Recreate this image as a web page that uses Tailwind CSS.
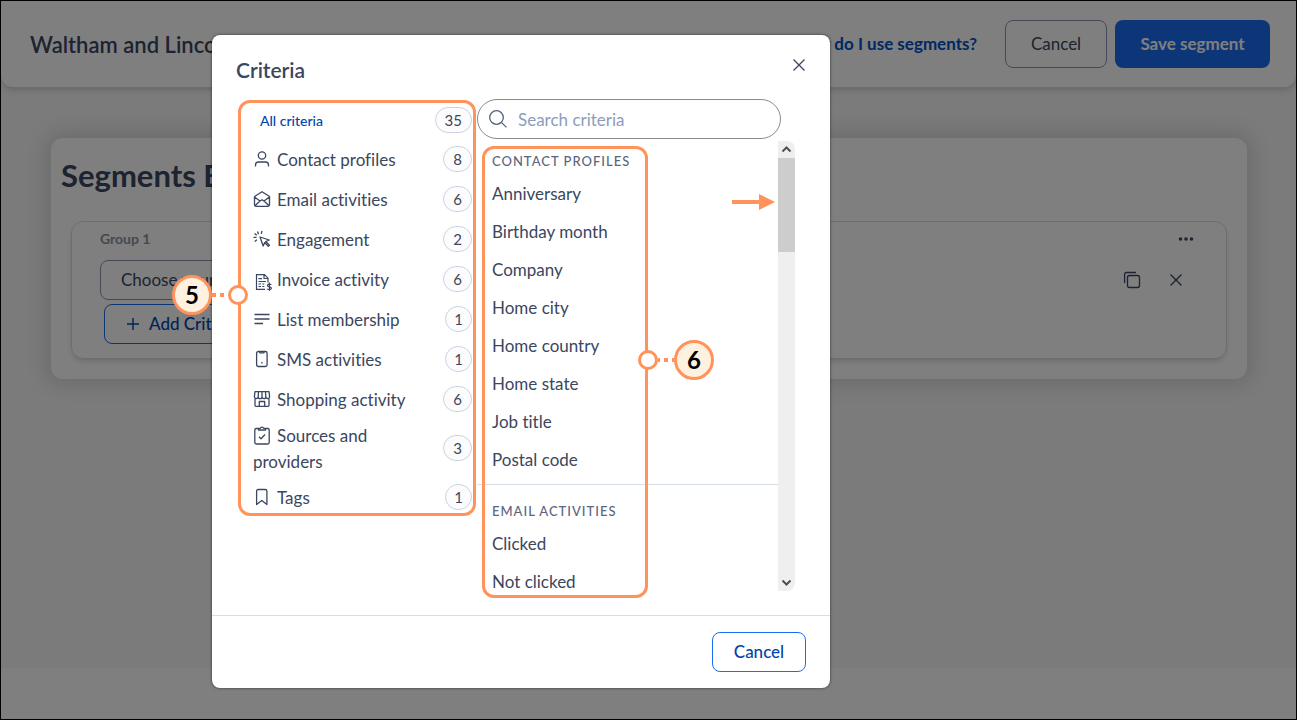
<!DOCTYPE html>
<html lang="en">
<head>
    <meta charset="UTF-8">
    <meta name="viewport" content="width=device-width, initial-scale=1.0">
    <title>Segments - Criteria</title>
    <script src="https://cdn.jsdelivr.net/npm/@tailwindcss/browser@4"></script>
</head>
<body class="relative flex min-h-screen flex-col border border-black bg-white font-['Lato',sans-serif] text-base text-[#3b4660] [font-variant-ligatures:none]">

    <!-- Page header -->
    <header class="z-10 flex h-[87px] items-center rounded-xl border-b border-[#d5dbe5] bg-white pl-[29px] pr-[26px] shadow-md">
        <h1 class="text-[22px] font-semibold">Waltham and Lincoln Customers</h1>
        <a href="#" class="ml-auto mr-[28px] text-[17px] font-bold text-[#0050c8]">How do I use segments?</a>
        <button class="mr-2 h-12 w-[102px] rounded-lg border border-[#8a94b0] text-[17px]">Cancel</button>
        <button class="h-12 w-[155px] rounded-lg bg-[#1b6cf2] text-[17px] font-bold text-white">Save segment</button>
    </header>

    <!-- Segment builder -->
    <main class="-mt-3 h-[592px] bg-[#f6f6f6] pl-[50px] pr-[49px] pt-[62px]">
        <section class="rounded-xl bg-white px-5 pb-5 pt-4 shadow-[0_0_20px_6px_rgba(0,0,0,0.12)]">
            <h2 class="-ml-[10px] text-[31px] leading-[42px] font-bold">Segments Builder</h2>
            <div class="mt-[25px] rounded-xl border border-[#d5dbe5] pb-[14px] pl-7 pr-8 pt-[7px] shadow-md">
                <div class="flex h-5 items-center justify-between">
                    <h3 class="text-sm font-bold text-[#8b909e]">Group 1</h3>
                    <button aria-label="Group options">
                        <svg class="h-4 w-4" viewBox="0 0 16 16" fill="currentColor"><circle cx="2.5" cy="8" r="1.8"/><circle cx="8" cy="8" r="1.8"/><circle cx="13.5" cy="8" r="1.8"/></svg>
                    </button>
                </div>
                <div class="mt-[11px] flex items-center">
                    <button class="h-10 rounded-lg border border-[#8a94b0] px-5 text-[17px]">Choose your criteria</button>
                    <button class="ml-auto mr-6" aria-label="Copy">
                        <svg class="h-5 w-5" viewBox="0 0 20 20" fill="none" stroke="currentColor" stroke-width="1.3"><rect x="5.5" y="5.5" width="12" height="12" rx="2"/><path d="M2.600 13V4.200a1.700 1.700 0 0 1 1.700-1.700H14"/></svg>
                    </button>
                    <button class="mr-2" aria-label="Remove">
                        <svg class="h-5 w-5" viewBox="0 0 20 20" fill="none" stroke="currentColor" stroke-width="1.4"><path d="M4.500 4.500l11 11M15.500 4.500l-11 11"/></svg>
                    </button>
                </div>
                <button class="ml-1 mt-1 flex h-10 items-center gap-2 rounded-lg border border-[#1b6cf2] px-5 text-[17px] font-medium text-[#0045ad]">
                    <svg class="h-4 w-4" viewBox="0 0 16 16" fill="none" stroke="currentColor" stroke-width="1.4"><path d="M8 2v12M2 8h12"/></svg>
                    Add Criteria
                </button>
            </div>
        </section>
    </main>

    <!-- Criteria modal -->
    <div class="absolute inset-0 z-20 bg-black/50 pl-[211px] pt-[34px]">
        <div class="w-full max-w-[618px] rounded-lg bg-white shadow-[0_0_3px_rgba(0,0,0,0.6)]" role="dialog" aria-labelledby="modal-title">
            <div class="flex h-16 items-start justify-between pl-6 pr-[21px] pt-5">
                <h2 id="modal-title" class="text-[21px] leading-[30px] font-semibold">Criteria</h2>
                <button aria-label="Close">
                    <svg class="h-5 w-5" viewBox="0 0 20 20" fill="none" stroke="currentColor" stroke-width="1.3"><path d="M4.500 4.500l11 11M15.500 4.500l-11 11"/></svg>
                </button>
            </div>

            <div class="flex items-start gap-px pb-6 pl-[26px] pr-[35px]">
                <!-- Category list -->
                <nav class="relative mt-px w-[238px] shrink-0 text-[17px] leading-[26px]">
                    <button class="flex h-[39px] w-full items-center justify-between pl-[22px] pr-1 text-left">
                        <span class="pt-0.5 text-sm font-medium text-[#0045ad]">All criteria</span>
                        <span class="h-[26px] shrink-0 rounded-full border border-[#cbd2e3] bg-[#fcfcfd] px-[9px] text-[15px] leading-6">35</span>
                    </button>
                    <button class="flex min-h-10 w-full items-center justify-between pl-[15px] pr-1 text-left">
                        <span class="pr-6 pt-0.5"><svg class="-ml-px mr-[5px] inline h-5 w-5 -translate-y-[3px]" viewBox="0 0 20 20" fill="none" stroke="currentColor" stroke-width="1.3"><circle cx="10" cy="6.500" r="3.700"/><path d="M3.500 17.500v-1.500a3 3 0 0 1 3-3h7a3 3 0 0 1 3 3v1.500"/></svg>Contact profiles</span>
                        <span class="h-[26px] shrink-0 rounded-full border border-[#cbd2e3] bg-[#fcfcfd] px-[9px] text-[15px] leading-6">8</span>
                    </button>
                    <button class="flex min-h-10 w-full items-center justify-between pl-[15px] pr-1 text-left">
                        <span class="pr-6 pt-0.5"><svg class="-ml-px mr-[5px] inline h-5 w-5 -translate-y-[3px]" viewBox="0 0 20 20" fill="none" stroke="currentColor" stroke-width="1.3" stroke-linejoin="round"><path d="M2.500 7.500L10 2.700l7.500 4.800v8.300a1.500 1.500 0 0 1-1.500 1.500H4a1.500 1.500 0 0 1-1.500-1.500zM2.500 8l5.500 4L10 10.700l2 1.300 5.500-4M8 12l-5 4.800M12 12l5 4.800"/></svg>Email activities</span>
                        <span class="h-[26px] shrink-0 rounded-full border border-[#cbd2e3] bg-[#fcfcfd] px-[9px] text-[15px] leading-6">6</span>
                    </button>
                    <button class="flex min-h-10 w-full items-center justify-between pl-[15px] pr-1 text-left">
                        <span class="pr-6 pt-0.5"><svg class="-ml-px mr-[5px] inline h-5 w-5 -translate-y-[3px]" viewBox="0 0 20 20" fill="none" stroke="currentColor" stroke-width="1.3" stroke-linejoin="round"><path d="M8 8l3.200 9 1.500-3.500 3.600 3.800 1.200-1.200-3.700-3.600L17.300 11zM5.500 2.500l1 2.800M10 1.800L9.300 4.800M2.500 4.500l2.300 1.800M1.500 8.700l3-.6M2.700 12.500l2.200-1.700"/></svg>Engagement</span>
                        <span class="h-[26px] shrink-0 rounded-full border border-[#cbd2e3] bg-[#fcfcfd] px-[9px] text-[15px] leading-6">2</span>
                    </button>
                    <button class="flex min-h-10 w-full items-center justify-between pl-[15px] pr-1 text-left">
                        <span class="pr-6 pt-0.5"><svg class="-ml-px mr-[5px] inline h-5 w-5 -translate-y-px" viewBox="0 0 20 20" fill="none" stroke="currentColor" stroke-width="1.2"><path d="M13 18.300H4.500V3.700h8l3.500 3.500v4.300M12 4v3.500h4M6.500 7.700h3.500M6.500 10.500h7.500M6.500 13h2.500M10.300 13h2M6.500 15.500h2.500M10.300 15.500h2"/><path d="M19.300 13.800c-.5-.9-3.800-1-3.800.7s3.900 1 3.900 2.700-3.500 1.700-4.200.5M17.400 11.500v8.300"/></svg>Invoice activity</span>
                        <span class="h-[26px] shrink-0 rounded-full border border-[#cbd2e3] bg-[#fcfcfd] px-[9px] text-[15px] leading-6">6</span>
                    </button>
                    <button class="flex min-h-10 w-full items-center justify-between pl-[15px] pr-1 text-left">
                        <span class="pr-6 pt-0.5"><svg class="-ml-px mr-[5px] inline h-5 w-5 -translate-y-[3px]" viewBox="0 0 20 20" fill="none" stroke="currentColor" stroke-width="1.3"><path d="M2.500 5.500h15M2.500 10h15M2.500 14.500h8.500"/></svg>List membership</span>
                        <span class="h-[26px] shrink-0 rounded-full border border-[#cbd2e3] bg-[#fcfcfd] px-2 text-[15px] leading-6">1</span>
                    </button>
                    <button class="flex min-h-10 w-full items-center justify-between pl-[15px] pr-1 text-left">
                        <span class="pr-6 pt-0.5"><svg class="-ml-px mr-[5px] inline h-5 w-5 -translate-y-[3px]" viewBox="0 0 20 20" fill="none" stroke="currentColor" stroke-width="1.3"><rect x="4.600" y="2.500" width="10.500" height="15" rx="1.800"/><path d="M7.500 2.800l.5 1h3.800l.5-1M9.900 13v1.500"/></svg>SMS activities</span>
                        <span class="h-[26px] shrink-0 rounded-full border border-[#cbd2e3] bg-[#fcfcfd] px-2 text-[15px] leading-6">1</span>
                    </button>
                    <button class="flex min-h-10 w-full items-center justify-between pl-[15px] pr-1 text-left">
                        <span class="pr-6 pt-0.5"><svg class="-ml-px mr-[5px] inline h-5 w-5 -translate-y-[3px]" viewBox="0 0 20 20" fill="none" stroke="currentColor" stroke-width="1.3" stroke-linejoin="round"><path d="M3 2.700h14l.6 4.800a1.900 1.900 0 0 1-3.800.2 1.900 1.900 0 0 1-3.800 0 1.900 1.900 0 0 1-3.800 0 1.900 1.900 0 0 1-3.800-.2zM6.500 2.700l-.3 5M10 2.700v5M13.500 2.700l.3 5M3 10v6.300a1 1 0 0 0 1 1h12a1 1 0 0 0 1-1V10M7.300 17v-4.500h5.400V17"/></svg>Shopping activity</span>
                        <span class="h-[26px] shrink-0 rounded-full border border-[#cbd2e3] bg-[#fcfcfd] px-[9px] text-[15px] leading-6">6</span>
                    </button>
                    <button class="flex min-h-10 w-full items-center justify-between py-0.5 pl-[15px] pr-1 text-left">
                        <span class="pr-6 pt-0.5"><svg class="-ml-px mr-[5px] inline h-5 w-5 -translate-y-[3px]" viewBox="0 0 20 20" fill="none" stroke="currentColor" stroke-width="1.3" stroke-linejoin="round"><path d="M6.500 3.500H4.300A1.500 1.500 0 0 0 2.800 5v12.500A1.500 1.500 0 0 0 4.300 19h11.400a1.500 1.500 0 0 0 1.500-1.500V5a1.500 1.500 0 0 0-1.500-1.500h-2.200M6.500 5V3.300h1.800a1.800 1.800 0 0 1 3.400 0h1.800V5zM7 11.700l2 2 4-4.200"/></svg>Sources and providers</span>
                        <span class="h-[26px] shrink-0 rounded-full border border-[#cbd2e3] bg-[#fcfcfd] px-[9px] text-[15px] leading-6">3</span>
                    </button>
                    <button class="flex min-h-10 w-full items-center justify-between pl-[15px] pr-1 text-left">
                        <span class="pr-6 pt-0.5"><svg class="-ml-px mr-[5px] inline h-5 w-5 -translate-y-[3px]" viewBox="0 0 20 20" fill="none" stroke="currentColor" stroke-width="1.3" stroke-linejoin="round"><path d="M4.600 17.500V4.200a1.700 1.700 0 0 1 1.700-1.700h6.900a1.700 1.700 0 0 1 1.700 1.700v13.300L9.800 13.500z"/></svg>Tags</span>
                        <span class="h-[26px] shrink-0 rounded-full border border-[#cbd2e3] bg-[#fcfcfd] px-2 text-[15px] leading-6">1</span>
                    </button>

                    <!-- Callout 5 -->
                    <div class="pointer-events-none absolute inset-x-0 bottom-px top-0 rounded-xl border-3 border-[#ff935a]"></div>
                    <div class="absolute -left-[66px] top-[175px] flex items-center">
                        <span class="flex h-10 w-10 items-center justify-center rounded-full border-3 border-[#ff935a] bg-[#fff1e0] text-2xl font-bold text-black">5</span>
                        <svg class="h-1 w-4" viewBox="0 0 16 4" stroke="#ff935a" stroke-width="4"><path d="M0 2h16" stroke-dasharray="4 4"/></svg>
                        <span class="h-5 w-5 rounded-full border-3 border-[#ff935a] bg-white"></span>
                    </div>
                </nav>

                <!-- Criteria list -->
                <div class="relative min-w-0 grow">
                    <label class="mr-[14px] flex h-10 items-center gap-[10px] rounded-full border border-[#8a8a8a] pl-[10px] pr-4">
                        <svg class="h-5 w-5 shrink-0 text-[#52617f]" viewBox="0 0 20 20" fill="none" stroke="currentColor" stroke-width="1.3"><circle cx="8.500" cy="8.500" r="6.800"/><path d="M13.400 13.400l5 5"/></svg>
                        <input type="text" aria-label="Search criteria" placeholder="Search criteria" class="w-full pt-0.5 text-[17px] outline-none placeholder:text-[#8e9cbb]">
                    </label>

                    <div class="mt-0.5 flex h-[450px]">
                        <div class="grow overflow-hidden text-[17px]">
                            <section class="border-b border-[#d5dde8] pb-[5px]">
                                <h3 class="pb-1 pl-[15px] pt-[10px] text-[13px] leading-5 font-medium tracking-[1px] text-[#5a6680]">CONTACT PROFILES</h3>
                                <ul class="pl-[15px] leading-[38px]">
                                    <li>Anniversary</li>
                                    <li>Birthday month</li>
                                    <li>Company</li>
                                    <li>Home city</li>
                                    <li>Home country</li>
                                    <li>Home state</li>
                                    <li>Job title</li>
                                    <li>Postal code</li>
                                </ul>
                            </section>
                            <section class="pt-[6px]">
                                <h3 class="pb-1 pl-[15px] pt-[10px] text-[13px] leading-5 font-medium tracking-[1px] text-[#5a6680]">EMAIL ACTIVITIES</h3>
                                <ul class="pl-[15px] leading-[38px]">
                                    <li>Clicked</li>
                                    <li>Not clicked</li>
                                </ul>
                            </section>
                        </div>
                        <div class="flex w-[17px] shrink-0 flex-col items-center rounded-r-lg bg-[#efefef]">
                            <svg class="h-[17px] w-[17px]" viewBox="0 0 17 17" fill="none" stroke="#505050" stroke-width="2"><path d="M4.500 10.500l4-4 4 4"/></svg>
                            <div class="h-[94px] w-full bg-[#cdcdcd]"></div>
                            <svg class="mt-auto h-[17px] w-[17px]" viewBox="0 0 17 17" fill="none" stroke="#505050" stroke-width="2"><path d="M4.500 6.500l4 4 4-4"/></svg>
                        </div>
                    </div>

                    <!-- Callout 6 -->
                    <div class="pointer-events-none absolute left-[5px] top-[47px] h-[452px] w-[166px] rounded-xl border-3 border-[#ff935a]"></div>
                    <div class="absolute left-[161px] top-[241px] flex items-center">
                        <span class="h-5 w-5 rounded-full border-3 border-[#ff935a] bg-white"></span>
                        <svg class="h-1 w-4" viewBox="0 0 16 4" stroke="#ff935a" stroke-width="4"><path d="M-2 2h18" stroke-dasharray="4 4"/></svg>
                        <span class="flex h-10 w-10 items-center justify-center rounded-full border-3 border-[#ff935a] bg-[#fff1e0] text-2xl font-bold text-black">6</span>
                    </div>
                    <svg class="absolute left-[255px] top-[95px] h-4 w-[43px]" viewBox="0 0 43 16" fill="#ff935a"><path d="M0 6h27V0l16 8-16 8v-6H0z"/></svg>
                </div>
            </div>

            <div class="flex justify-end border-t border-[#d5dde8] px-6 py-4">
                <button class="h-10 w-[94px] rounded-lg border border-[#1b6cf2] text-[17px] font-medium text-[#0045ad]">Cancel</button>
            </div>
        </div>
    </div>
</body>
</html>
